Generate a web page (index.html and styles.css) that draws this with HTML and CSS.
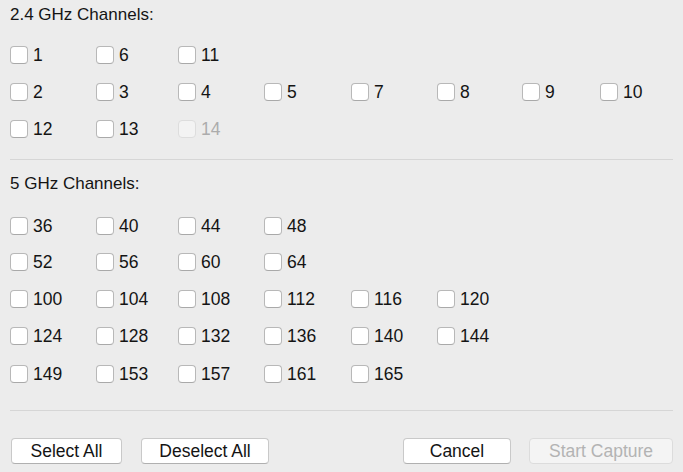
FILE: index.html
```html
<!DOCTYPE html>
<html>
<head>
<meta charset="utf-8">
<link rel="stylesheet" href="styles.css">
</head>
<body>
<div class="panel">
  <h2 class="title title-first">2.4 GHz Channels:</h2>
  <div class="grid grid-24">
    <label class="cb"><input type="checkbox"><span>1</span></label>
    <label class="cb"><input type="checkbox"><span>6</span></label>
    <label class="cb"><input type="checkbox"><span>11</span></label>
    <span></span><span></span><span></span><span></span><span></span>
    <label class="cb"><input type="checkbox"><span>2</span></label>
    <label class="cb"><input type="checkbox"><span>3</span></label>
    <label class="cb"><input type="checkbox"><span>4</span></label>
    <label class="cb"><input type="checkbox"><span>5</span></label>
    <label class="cb"><input type="checkbox"><span>7</span></label>
    <label class="cb"><input type="checkbox"><span>8</span></label>
    <label class="cb"><input type="checkbox"><span>9</span></label>
    <label class="cb"><input type="checkbox"><span>10</span></label>
    <label class="cb"><input type="checkbox"><span>12</span></label>
    <label class="cb"><input type="checkbox"><span>13</span></label>
    <label class="cb disabled"><input type="checkbox" disabled><span>14</span></label>
  </div>
  <div class="sep sep-first"></div>
  <h2 class="title title-second">5 GHz Channels:</h2>
  <div class="grid grid-5">
    <label class="cb"><input type="checkbox"><span>36</span></label>
    <label class="cb"><input type="checkbox"><span>40</span></label>
    <label class="cb"><input type="checkbox"><span>44</span></label>
    <label class="cb"><input type="checkbox"><span>48</span></label>
    <span></span><span></span><span></span><span></span>
    <label class="cb"><input type="checkbox"><span>52</span></label>
    <label class="cb"><input type="checkbox"><span>56</span></label>
    <label class="cb"><input type="checkbox"><span>60</span></label>
    <label class="cb"><input type="checkbox"><span>64</span></label>
    <span></span><span></span><span></span><span></span>
    <label class="cb"><input type="checkbox"><span>100</span></label>
    <label class="cb"><input type="checkbox"><span>104</span></label>
    <label class="cb"><input type="checkbox"><span>108</span></label>
    <label class="cb"><input type="checkbox"><span>112</span></label>
    <label class="cb"><input type="checkbox"><span>116</span></label>
    <label class="cb"><input type="checkbox"><span>120</span></label>
    <span></span><span></span>
    <label class="cb"><input type="checkbox"><span>124</span></label>
    <label class="cb"><input type="checkbox"><span>128</span></label>
    <label class="cb"><input type="checkbox"><span>132</span></label>
    <label class="cb"><input type="checkbox"><span>136</span></label>
    <label class="cb"><input type="checkbox"><span>140</span></label>
    <label class="cb"><input type="checkbox"><span>144</span></label>
    <span></span><span></span>
    <label class="cb"><input type="checkbox"><span>149</span></label>
    <label class="cb"><input type="checkbox"><span>153</span></label>
    <label class="cb"><input type="checkbox"><span>157</span></label>
    <label class="cb"><input type="checkbox"><span>161</span></label>
    <label class="cb"><input type="checkbox"><span>165</span></label>
  </div>
  <div class="sep sep-second"></div>
  <div class="buttons">
    <button class="btn btn-select">Select All</button>
    <button class="btn btn-deselect">Deselect All</button>
    <div class="spacer"></div>
    <button class="btn btn-cancel">Cancel</button>
    <button class="btn btn-start" disabled>Start Capture</button>
  </div>
</div>
</body>
</html>
```
FILE: styles.css
```css
html, body {
  margin: 0;
  padding: 0;
  background: #ececec;
}
body {
  width: 683px;
  height: 472px;
  overflow: hidden;
  font-family: "Liberation Sans", Arial, sans-serif;
  font-size: 17px;
  color: #141414;
}
.panel {
  padding: 0 10px;
}
.title {
  margin: 0;
  font-size: 17px;
  font-weight: normal;
  line-height: 20px;
  height: 20px;
}
.title-first {
  padding-top: 5px;
}
.title-second {
  margin-top: 14px;
}
.grid {
  display: grid;
  grid-template-columns: 86px 82px 86px 87px 86px 85px 78px 1fr;
}
.grid-24 {
  margin-top: 11px;
  grid-template-rows: 37px 37px 37px;
}
.grid-5 {
  margin-top: 14px;
  grid-template-rows: 35px 37px 37px 38px 38px;
}
.cb {
  display: flex;
  align-items: center;
  gap: 5px;
  white-space: nowrap;
  font-size: 17.5px;
}
.cb input {
  appearance: none;
  -webkit-appearance: none;
  margin: 0;
  width: 18px;
  height: 18px;
  box-sizing: border-box;
  border: 1px solid #b8b8b8;
  border-bottom-color: #a9a9a9;
  border-radius: 4px;
  background: #ffffff;
  flex: none;
}
.cb span {
  line-height: 20px;
}
.cb.disabled input {
  background: #f3f3f3;
  border-color: #dddddd;
}
.cb.disabled span {
  color: #acacac;
}
.sep {
  height: 1px;
  background: #d6d6d6;
}
.sep-first {
  margin-top: 12px;
}
.sep-second {
  margin-top: 17px;
}
.buttons {
  display: flex;
  margin-top: 27px;
  padding-left: 1px;
}
.spacer {
  flex: 1;
}
.btn {
  height: 26px;
  box-sizing: border-box;
  font-family: "Liberation Sans", Arial, sans-serif;
  font-size: 17.5px;
  color: #141414;
  background: #ffffff;
  border: 1px solid #c9c9c9;
  border-bottom-color: #b0b0b0;
  border-radius: 4px;
  padding: 0;
  line-height: 25px;
  text-align: center;
}
.btn-select {
  width: 111px;
}
.btn-deselect {
  width: 128px;
  margin-left: 19px;
}
.btn-cancel {
  width: 108px;
}
.btn-start {
  width: 144px;
  margin-left: 18px;
  background: #f4f4f4;
  border-color: #dcdcdc;
  color: #b3b3b3;
}
```
